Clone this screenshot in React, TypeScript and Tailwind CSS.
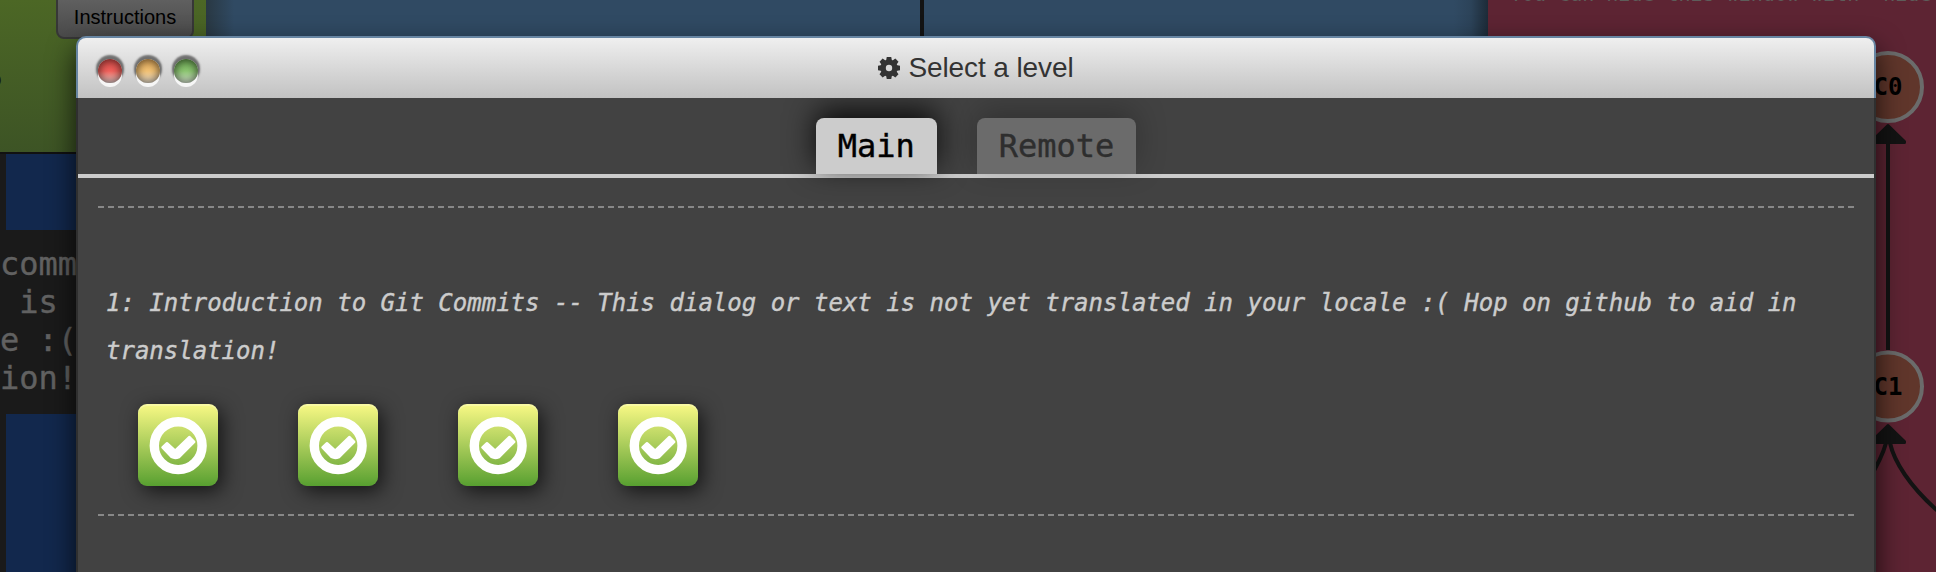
import React from "react";

const MONO = "font-['DejaVu_Sans_Mono',monospace]";
const SANS = "font-['Liberation_Sans',Arial,sans-serif]";

function LeftColumn() {
  return (
    <div className="flex w-[206px] shrink-0 flex-col bg-[#1a1a1a]">
      <div className="relative h-[152px] shrink-0 overflow-hidden bg-gradient-to-b from-[#4c6725] to-[#3d5425]">
        <div className="flex justify-end pr-3">
          <button
            className={`${SANS} -mt-2 h-[47px] w-[138px] rounded-[8px] border-2 border-[#373737] bg-gradient-to-b from-[#636363] to-[#4a4a4a] pt-[3px] text-[20px] leading-[24px] text-black`}
          >
            Instructions
          </button>
        </div>
        <span className={`${SANS} absolute top-[66px] -left-[19px] text-[38px] leading-[42px] text-[#141414]`}>?</span>
      </div>
      <div className="h-0.5 shrink-0 bg-[#111111]" />
      <div className="ml-1.5 h-[76px] shrink-0 bg-[#12284d]" />
      <div className={`${MONO} mt-[15px] h-[169px] shrink-0 text-[32px] leading-[38px] whitespace-pre text-[#616161] [-webkit-text-stroke:0.4px]`}>
        <div>comm</div>
        <div>{" is"}</div>
        <div>e :(</div>
        <div>ion!</div>
      </div>
      <div className="ml-1.5 grow bg-[#12284d]" />
    </div>
  );
}

function CenterColumn() {
  return (
    <div className="flex grow justify-between bg-[#304a63]">
      <div className="w-7 bg-gradient-to-r from-[#293843] to-[#304a63]" />
      <div className="mr-[530px] ml-auto w-1 bg-[#131313]" />
      <div className="w-[34px] bg-gradient-to-r from-[#304a63] via-[#2c4359] to-[#1d2b38]" />
    </div>
  );
}

function GoalColumn() {
  return (
    <div className="relative w-[448px] shrink-0 overflow-hidden bg-[#5d2433]">
      <div className={`${MONO} absolute -top-[18px] left-[22px] text-[20px] leading-[24px] whitespace-pre text-[#5d5d5a]`}>
        You can hide this window with "hide goal"
      </div>
      <svg className="absolute inset-0" width="448" height="572" viewBox="1488 0 448 572">
        <g fill="none" stroke="#131313" strokeWidth="4">
          <path d="M1888 350V140" />
          <path d="M1886 443Q1882 458 1868 481" />
          <path d="M1890 443C1894 461 1909 486 1939 512" />
        </g>
        <g fill="#131313" stroke="#131313" strokeWidth="3" strokeLinejoin="round">
          <path d="M1888 125.5 1904.5 141.5V142.500H1871.500V141.500Z" />
          <path d="M1888 425.500 1904.500 441.500V442.500H1871.500V441.500Z" />
        </g>
        <g fill="#60362b" stroke="#6b6b6b" strokeWidth="4">
          <circle cx="1888" cy="87" r="34" />
          <circle cx="1888" cy="386.500" r="34" />
        </g>
        <g className={MONO} fontSize="24" fontWeight="700" textAnchor="middle" fill="#000">
          <text x="1888" y="95">C0</text>
          <text x="1888" y="395">C1</text>
        </g>
      </svg>
    </div>
  );
}

function TrafficLight({ tone }: { tone: string }) {
  return (
    <div
      className={`${tone} size-6 rounded-full shadow-[0_4px_0_0_#f6f6f6,0_-2px_2px_2px_rgba(0,0,0,0.5),inset_0_0_8px_1px_rgba(0,0,0,0.6)]`}
    />
  );
}

function LevelIcon() {
  return (
    <div className="flex h-[82px] w-20 items-center justify-center rounded-[9px] bg-gradient-to-b from-[#f9f985] to-[#57a030] shadow-[inset_0_2px_0_rgba(255,255,255,0.25),4px_5px_20px_rgba(0,0,0,0.7)]">
      <svg width="60" height="60" viewBox="0 0 60 60">
        <circle cx="30.200" cy="30.700" r="23.900" fill="none" stroke="#fff" strokeWidth="9.400" />
        <path
          d="M14.500 32.500 19 28.200 27.200 35.600 41.500 22 46.200 26.800 31 42 Q27.200 43.800 23.500 42Z"
          fill="#fff"
          stroke="#fff"
          strokeWidth="2.500"
          strokeLinejoin="round"
        />
      </svg>
    </div>
  );
}

function GearIcon() {
  return (
    <svg width="22" height="22" viewBox="-11 -11 22 22" fill="#333">
      {[0, 45, 90, 135].map((a) => (
        <path key={a} transform={`rotate(${a})`} d="M-2.200 -11.200H2.200L3 -7V7L2.200 11.200H-2.200L-3 7V-7Z" />
      ))}
      <circle r="8.600" />
      <circle r="3.200" fill="#d8d8d8" />
    </svg>
  );
}

function Dialog() {
  return (
    <div className="absolute top-9 left-[76px] flex h-[600px] w-[1800px] flex-col rounded-t-[10px] shadow-[0_12px_28px_rgba(0,0,0,0.75)]">
      <div className="relative flex h-[62px] shrink-0 items-center justify-center rounded-t-[10px] border-2 border-b-0 border-[#6785a2] bg-gradient-to-b from-[#efefef] to-[#c2c2c2]">
        <div className="absolute top-[21px] left-5 flex gap-3.5">
          <TrafficLight tone="bg-gradient-to-b from-[#d64c49] via-[#f0605b] to-[#ecd0cf]" />
          <TrafficLight tone="bg-gradient-to-b from-[#dda558] via-[#f3c274] to-[#f0e4d0]" />
          <TrafficLight tone="bg-gradient-to-b from-[#69a351] via-[#8cc671] to-[#dcebd4]" />
        </div>
        <div className={`${SANS} flex items-center gap-2 text-[28px] leading-[32px] tracking-[-0.1px] text-[#333]`}>
          <GearIcon />
          <span>Select a level</span>
        </div>
      </div>
      <div className={`${MONO} grow border-x-2 border-[#2f2f2f] bg-[#424242]`}>
        <div className="flex h-20 items-end justify-center gap-10 border-b-4 border-[#ccc] text-[32px] leading-[56px] [-webkit-text-stroke:0.4px]">
          <div className="h-14 rounded-t-[8px] bg-[#ccc] px-[22px] text-black shadow-[0_-8px_30px_rgba(0,0,0,0.85)]">Main</div>
          <div className="h-14 rounded-t-[8px] bg-[#6b6b6b] px-[22px] text-[#2e2e2e] shadow-[0_-8px_30px_rgba(0,0,0,0.25)]">Remote</div>
        </div>
        <div className="mx-5 mt-7 h-[310px] border-y-2 border-dashed border-[#888] px-2 pt-[72px]">
          <p className="-mt-px mb-[29px] text-[24px] leading-[48px] text-[#ccc] italic [-webkit-text-stroke:0.4px]">
            1: Introduction to Git Commits -- This dialog or text is not yet translated in your locale :( Hop on github to aid in translation!
          </p>
          <div className="ml-8 flex gap-20">
            <LevelIcon />
            <LevelIcon />
            <LevelIcon />
            <LevelIcon />
          </div>
        </div>
      </div>
    </div>
  );
}

export default function App() {
  return (
    <div className="relative flex h-[572px] w-[1936px] overflow-hidden">
      <LeftColumn />
      <CenterColumn />
      <GoalColumn />
      <Dialog />
    </div>
  );
}
